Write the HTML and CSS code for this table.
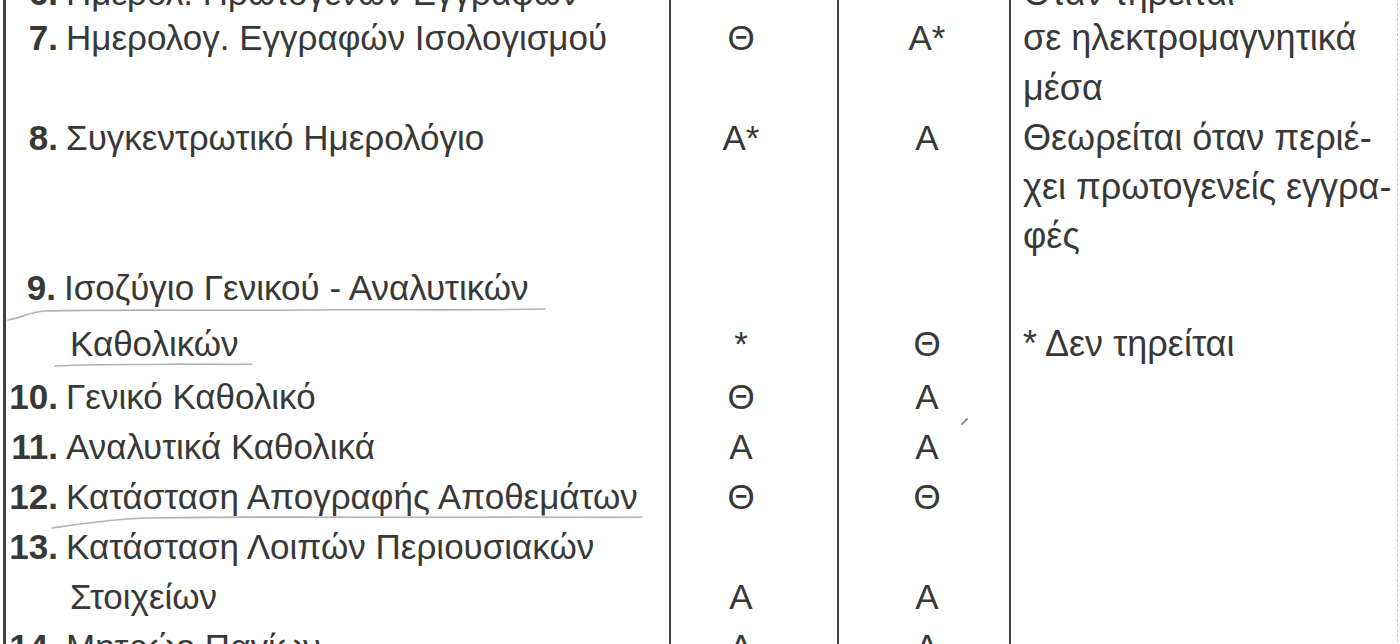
FILE: index.html
```html
<!DOCTYPE html>
<html lang="el">
<head>
<meta charset="utf-8">
<title>Πίνακας βιβλίων</title>
<link rel="stylesheet" href="styles.css">
</head>
<body>
<div class="page">
  <div class="sheet">
    <div class="row r6">
      <div class="c1"><div class="item"><span class="num">6.</span><span class="txt">Ημερολ. Πρωτογενών Εγγραφών</span></div></div>
      <div class="c2"></div>
      <div class="c3"></div>
      <div class="c4">Όταν τηρείται</div>
    </div>
    <div class="row r7">
      <div class="c1"><div class="item"><span class="num">7.</span><span class="txt">Ημερολογ. Εγγραφών Ισολογισμού</span></div></div>
      <div class="c2">Θ</div>
      <div class="c3">Α*</div>
      <div class="c4">σε ηλεκτρομαγνητικά<br>μέσα</div>
    </div>
    <div class="row r8">
      <div class="c1"><div class="item"><span class="num">8.</span><span class="txt">Συγκεντρωτικό Ημερολόγιο</span></div></div>
      <div class="c2">Α*</div>
      <div class="c3">Α</div>
      <div class="c4">Θεωρείται όταν περιέ-<br>χει πρωτογενείς εγγρα-<br>φές</div>
    </div>
    <div class="row r9">
      <div class="c1"><div class="item"><span class="num n9">9.</span><span class="txt">Ισοζύγιο Γενικού - Αναλυτικών</span></div><div class="cont">Καθολικών</div></div>
      <div class="c2"><div class="second">*</div></div>
      <div class="c3"><div class="second">Θ</div></div>
      <div class="c4"><div class="second">* Δεν τηρείται</div></div>
    </div>
    <div class="row">
      <div class="c1"><div class="item"><span class="num">10.</span><span class="txt">Γενικό Καθολικό</span></div></div>
      <div class="c2">Θ</div>
      <div class="c3">Α</div>
      <div class="c4"></div>
    </div>
    <div class="row">
      <div class="c1"><div class="item"><span class="num">11.</span><span class="txt">Αναλυτικά Καθολικά</span></div></div>
      <div class="c2">Α</div>
      <div class="c3">Α</div>
      <div class="c4"></div>
    </div>
    <div class="row">
      <div class="c1"><div class="item"><span class="num">12.</span><span class="txt">Κατάσταση Απογραφής Αποθεμάτων</span></div></div>
      <div class="c2">Θ</div>
      <div class="c3">Θ</div>
      <div class="c4"></div>
    </div>
    <div class="row">
      <div class="c1"><div class="item"><span class="num">13.</span><span class="txt">Κατάσταση Λοιπών Περιουσιακών</span></div><div class="cont">Στοιχείων</div></div>
      <div class="c2"><div class="second-50">Α</div></div>
      <div class="c3"><div class="second-50">Α</div></div>
      <div class="c4"></div>
    </div>
    <div class="row">
      <div class="c1"><div class="item"><span class="num">14.</span><span class="txt">Μητρώο Παγίων</span></div></div>
      <div class="c2">Α</div>
      <div class="c3">Α</div>
      <div class="c4"></div>
    </div>
  </div>
  <svg class="marks" width="1400" height="644" viewBox="0 0 1400 644" aria-hidden="true">
    <path d="M8 320 C20 318 30 312 45 311 C120 309 220 311 300 310 C380 309 450 311 545 309" />
    <path d="M55 366 C90 364 140 365 180 364 C210 364 235 365 252 364" />
    <path d="M52 528 C80 524 110 519 150 518 C260 516 420 518 520 517 C580 517 615 518 642 517" />
    <path class="speck" d="M962 424 L967 419" />
  </svg>
</div>
</body>
</html>
```

FILE: styles.css
```css
html, body {
  margin: 0;
  padding: 0;
  background: #ffffff;
}

body {
  width: 1400px;
  height: 644px;
  overflow: hidden;
  font-family: "Liberation Sans", Arial, sans-serif;
  font-size: 35px;
  color: #383838;
}

.page {
  position: relative;
  width: 1400px;
  height: 644px;
  overflow: hidden;
}

.sheet {
  margin-top: -27px;
  margin-left: 3px;
  border-left: 3px solid #444444;
  width: 1391px;
  border-right: 1px dashed #c8c8c8;
}

.row {
  display: grid;
  grid-template-columns: 663px 168px 172px 385px;
  line-height: 50px;
}

.r6 { line-height: 40px; }
.r8 { line-height: 49px; }
.r9 { line-height: 56px; }

.c1 {
  white-space: nowrap;
}

.c2, .c3, .c4 {
  border-left: 2px solid #444444;
}

.c2 {
  text-align: center;
  padding-right: 26px;
}

.c3 {
  text-align: center;
  padding-left: 6px;
}

.c4 {
  padding-left: 12px;
  white-space: nowrap;
  font-size: 36px;
}

.item {
  display: flex;
}

.num {
  width: 52px;
  text-align: right;
  font-weight: bold;
  flex: none;
}

.n9 {
  width: 50px;
}

.txt {
  margin-left: 8px;
}

.cont {
  padding-left: 64px;
}

.second {
  padding-top: 56px;
}

.second-50 {
  padding-top: 50px;
}

.marks {
  position: absolute;
  left: 0;
  top: 0;
  pointer-events: none;
}

.marks path {
  fill: none;
  stroke: #9a9a9a;
  stroke-width: 1.6;
  stroke-linecap: round;
  opacity: 0.75;
}

.marks .speck {
  stroke: #666;
  stroke-width: 2;
}
```
